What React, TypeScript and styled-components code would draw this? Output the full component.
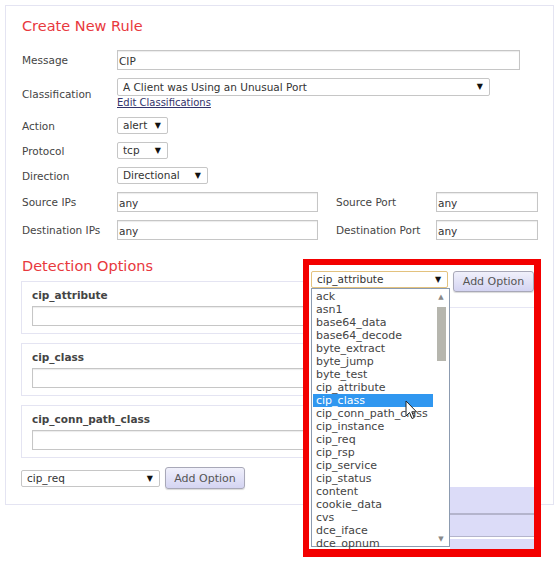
import styled, { createGlobalStyle } from "styled-components";

const GlobalStyle = createGlobalStyle`
  body {
    margin: 0;
    background: #fff;
    font-family: "DejaVu Sans", Verdana, sans-serif;
    color: #444;
  }
  * { box-sizing: border-box; }
`;

const Page = styled.div`
  position: relative;
  width: 560px;
  height: 564px;
  padding: 5px 0 0 5px;
  overflow: hidden;
`;

const Panel = styled.div`
  width: 549px;
  border: 1px solid #e4e4f2;
  padding: 10px 15px 15px 16px;
`;

const Heading = styled.h1<{ $top?: number }>`
  margin: ${p => p.$top ?? 0}px 0 0;
  font-size: 14.5px;
  line-height: 20px;
  font-weight: normal;
  color: #e8383d;
`;

const FormGrid = styled.div`
  display: grid;
  grid-template-columns: 95px 1fr;
  row-gap: 8px;
  align-items: center;
  margin-top: 14px;
`;

const Label = styled.div`
  font-size: 10.5px;
  color: #444;
`;

const Input = styled.input<{ $w?: number; $h?: number }>`
  display: block;
  width: ${p => (p.$w ? `${p.$w}px` : "100%")};
  height: ${p => p.$h ?? 20}px;
  margin: 0;
  padding: 2px 1px 0;
  border: 1px solid #c6c6c6;
  box-shadow: inset 0 1px 1px rgba(0, 0, 0, 0.08);
  background: #fff;
  font-family: "DejaVu Sans", Verdana, sans-serif;
  font-size: 10.5px;
  color: #333;
  outline: none;
`;

const SelectBox = styled.div<{ $w: number; $h?: number; $focus?: boolean }>`
  position: relative;
  width: ${p => p.$w}px;
  height: ${p => p.$h ?? 17}px;
  border: 1px solid ${p => (p.$focus ? "#e3c27e" : "#c6c6c6")};
  border-radius: 2px;
  background: #fff;
  padding-left: 5px;
  font-size: 10.5px;
  line-height: ${p => (p.$h ?? 17) - 2}px;
  color: #333;
  white-space: nowrap;

  &::after {
    content: "▼";
    position: absolute;
    right: 6px;
    top: 0;
    font-size: 8px;
    color: #111;
  }
`;

const LinkText = styled.a`
  display: block;
  font-size: 10px;
  line-height: 13px;
  color: #33336b;
  text-decoration: underline;
`;

const InlineRow = styled.div`
  display: flex;
  align-items: center;
`;

const SideLabel = styled(Label)`
  width: 100px;
  margin-left: 18px;
`;

const OptionList = styled.div`
  display: flex;
  flex-direction: column;
  gap: 9px;
  margin: 5px 0 0 -1px;
`;

const OptionBox = styled.div`
  width: 518px;
  border: 1px solid #e4e4f2;
  padding: 7px 10px 7px 10px;
`;

const OptionName = styled.div`
  font-size: 10.5px;
  line-height: 13px;
  font-weight: bold;
  color: #444;
  margin-bottom: 4px;
`;

const FooterRow = styled.div`
  display: flex;
  align-items: center;
  gap: 5px;
  margin: 9px 0 0 -1px;
`;

const Button = styled.button<{ $w?: number; $h?: number }>`
  width: ${p => p.$w ?? 80}px;
  height: ${p => p.$h ?? 22}px;
  padding: 0;
  border: 1px solid #a8a8b8;
  border-radius: 3px;
  background: linear-gradient(#f0f0fb, #d4d4f2);
  box-shadow: 0 1px 1px rgba(0, 0, 0, 0.15);
  font-family: "DejaVu Sans", Verdana, sans-serif;
  font-size: 11px;
  color: #555;
`;

/* red call-out laid over the page */
const Callout = styled.div`
  position: absolute;
  left: 303px;
  top: 259px;
  width: 238px;
  height: 298px;
  border-style: solid;
  border-color: #f30000;
  border-width: 6px 7px 8px 6px;
  background: #fff;
  overflow: hidden;
  display: flex;
  flex-direction: column;
`;

const CalloutTop = styled.div`
  display: flex;
  align-items: flex-start;
  gap: 5px;
  padding: 6px 0 0 2px;
`;

const Divider = styled.div`
  height: 1px;
  margin: 15px 0 0 141px;
  background: #e6e6f4;
`;

const UnderStack = styled.div`
  margin-top: auto;
  padding-left: 141px;
  display: flex;
  flex-direction: column;
`;

const UnderBar = styled.div<{ $h: number; $line: number; $gap?: number }>`
  height: ${p => p.$h}px;
  background: #dcdcf8;
  border-bottom: ${p => p.$line}px solid #b4b4cc;
  margin-bottom: ${p => p.$gap ?? 0}px;
`;

const DropList = styled.div`
  position: absolute;
  left: 2px;
  top: 23px;
  width: 139px;
  height: 259px;
  border: 1px solid #8c9bb0;
  background: #fff;
  padding: 1px 0 0 1px;
  z-index: 2;
`;

const DropItem = styled.div<{ $active?: boolean }>`
  width: 120px;
  height: 13px;
  padding-left: 3px;
  font-size: 11px;
  line-height: 13px;
  white-space: nowrap;
  color: ${p => (p.$active ? "#fff" : "#444")};
  background: ${p => (p.$active ? "#3097f0" : "transparent")};
`;

const ScrollTrack = styled.div`
  position: absolute;
  top: 4px;
  bottom: 3px;
  right: 3px;
  width: 10px;
  display: flex;
  flex-direction: column;
  align-items: center;
`;

const ScrollArrow = styled.div`
  font-size: 7px;
  line-height: 8px;
  color: #888;
`;

const ScrollThumb = styled.div`
  width: 9px;
  height: 54px;
  margin-top: 6px;
  background: #b6b6ae;
`;

const ScrollRest = styled.div`
  flex: 1;
`;

const Cursor = styled.svg`
  position: absolute;
  left: 405px;
  top: 400px;
  z-index: 5;
`;

const listItems = [
  "ack", "asn1", "base64_data", "base64_decode", "byte_extract", "byte_jump",
  "byte_test", "cip_attribute", "cip_class", "cip_conn_path_class", "cip_instance",
  "cip_req", "cip_rsp", "cip_service", "cip_status", "content", "cookie_data",
  "cvs", "dce_iface", "dce_opnum",
];

const options = ["cip_attribute", "cip_class", "cip_conn_path_class"];

export default function App() {
  return (
    <Page>
      <GlobalStyle />
      <Panel>
        <Heading>Create New Rule</Heading>
        <FormGrid>
          <Label>Message</Label>
          <Input $w={403} defaultValue="CIP" readOnly />

          <Label>Classification</Label>
          <div>
            <SelectBox $w={373} $h={18}>A Client was Using an Unusual Port</SelectBox>
            <LinkText>Edit Classifications</LinkText>
          </div>

          <Label>Action</Label>
          <SelectBox $w={51}>alert</SelectBox>

          <Label>Protocol</Label>
          <SelectBox $w={51}>tcp</SelectBox>

          <Label>Direction</Label>
          <SelectBox $w={91}>Directional</SelectBox>

          <Label>Source IPs</Label>
          <InlineRow>
            <Input $w={201} defaultValue="any" readOnly />
            <SideLabel>Source Port</SideLabel>
            <Input $w={102} defaultValue="any" readOnly />
          </InlineRow>

          <Label>Destination IPs</Label>
          <InlineRow>
            <Input $w={201} defaultValue="any" readOnly />
            <SideLabel>Destination Port</SideLabel>
            <Input $w={102} defaultValue="any" readOnly />
          </InlineRow>
        </FormGrid>

        <Heading $top={16}>Detection Options</Heading>
        <OptionList>
          {options.map(name => (
            <OptionBox key={name}>
              <OptionName>{name}</OptionName>
              <Input readOnly />
            </OptionBox>
          ))}
        </OptionList>
        <FooterRow>
          <SelectBox $w={139}>cip_req</SelectBox>
          <Button>Add Option</Button>
        </FooterRow>
      </Panel>

      <Callout>
        <CalloutTop>
          <SelectBox $w={139} $focus>cip_attribute</SelectBox>
          <Button $w={82} $h={21}>Add Option</Button>
        </CalloutTop>
        <Divider />
        <UnderStack>
          <UnderBar $h={28} $line={2} />
          <UnderBar $h={22} $line={1} $gap={2} />
          <UnderBar $h={10} $line={0} />
        </UnderStack>
        <DropList>
          {listItems.map(item => (
            <DropItem key={item} $active={item === "cip_class"}>{item}</DropItem>
          ))}
          <ScrollTrack>
            <ScrollArrow>▲</ScrollArrow>
            <ScrollThumb />
            <ScrollRest />
            <ScrollArrow>▼</ScrollArrow>
          </ScrollTrack>
        </DropList>
      </Callout>

      <Cursor width="13" height="21" viewBox="0 0 13 21">
        <path d="M1 1 L1 16 L4.5 12.5 L7 18.5 L9.2 17.6 L6.8 11.8 L11.5 11.8 Z" fill="#fff" stroke="#222" strokeWidth="1" strokeLinejoin="round" />
      </Cursor>
    </Page>
  );
}
